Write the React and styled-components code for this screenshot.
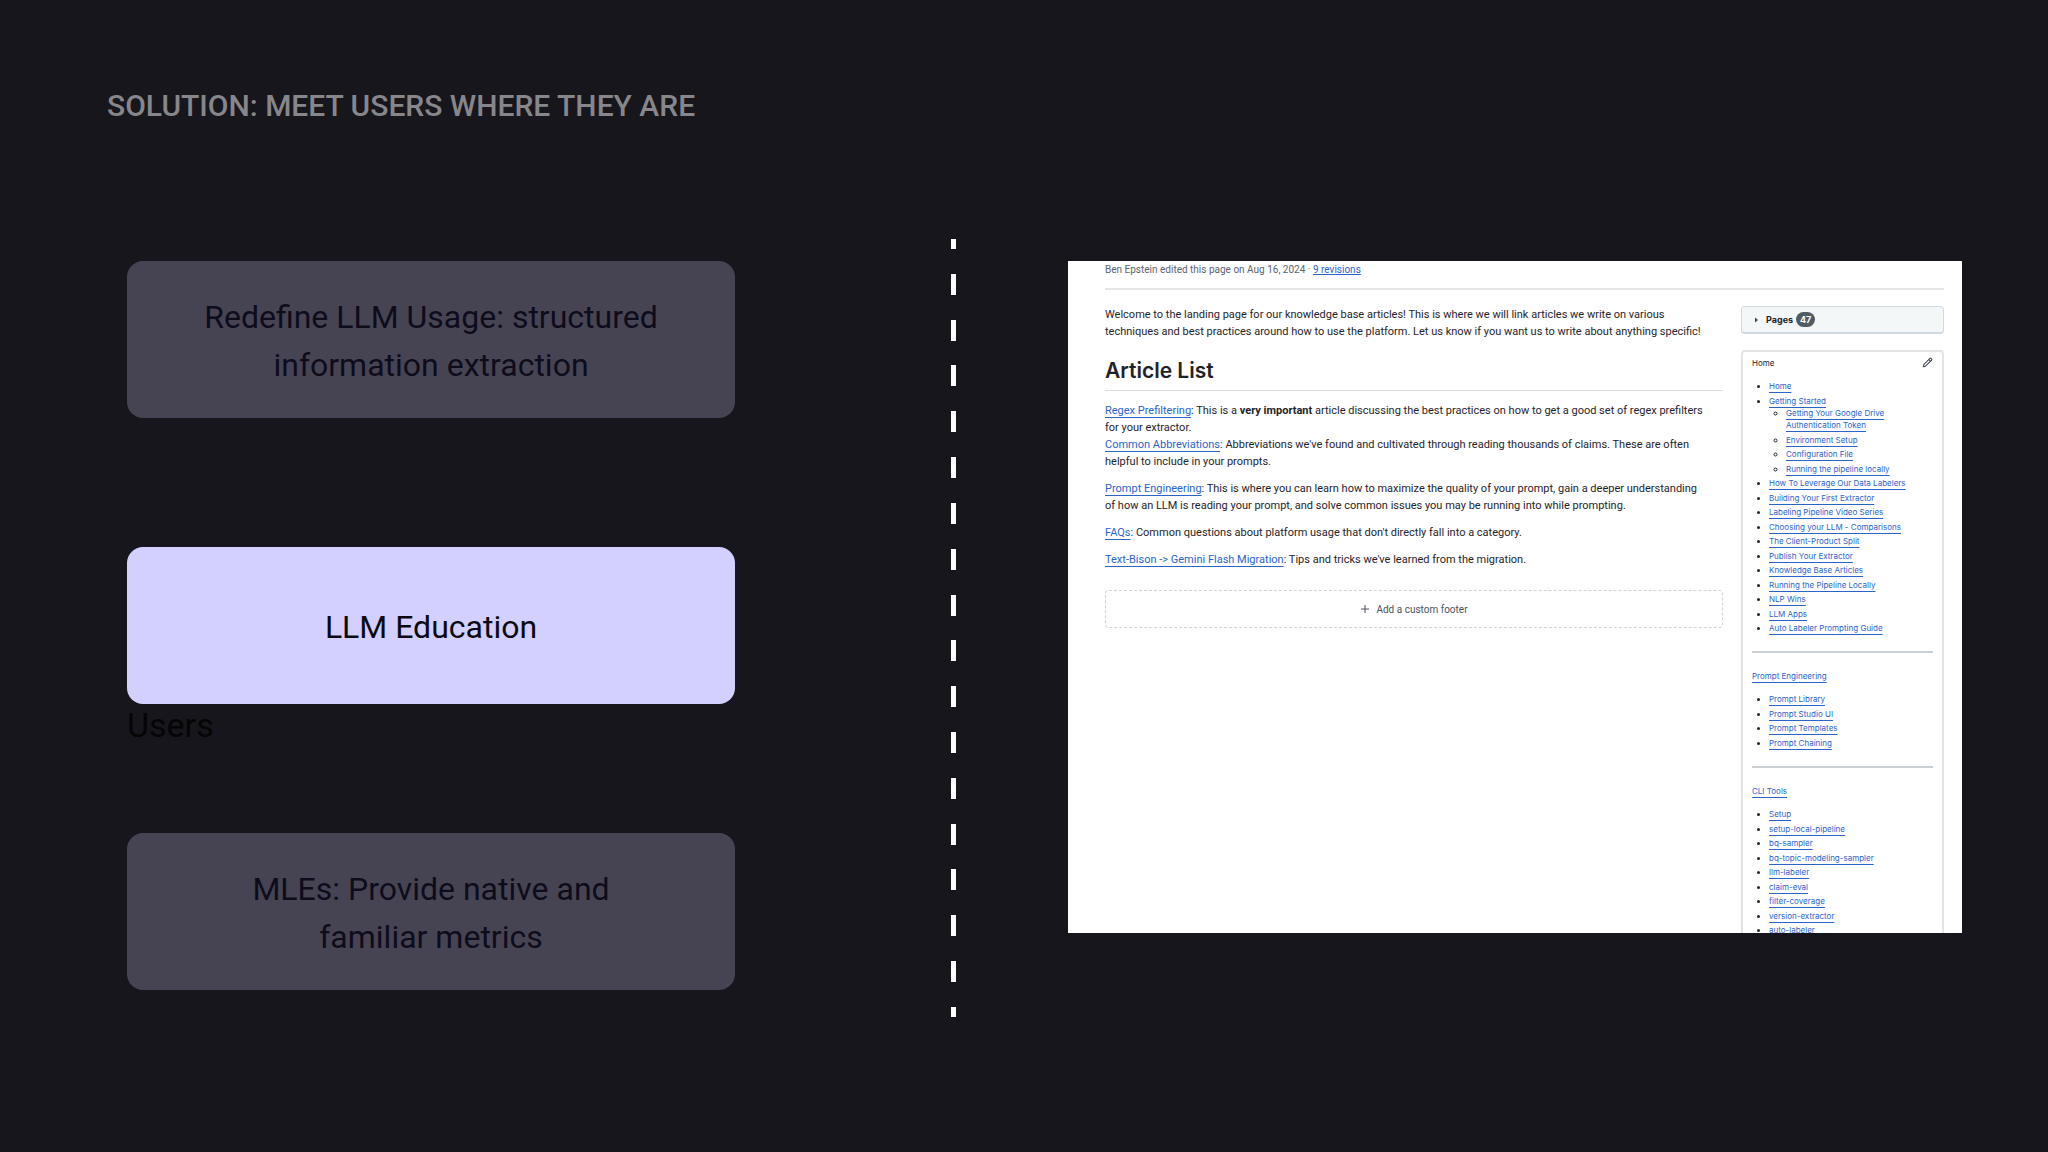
import React from "react";
import styled, { createGlobalStyle, css } from "styled-components";

const GlobalStyle = createGlobalStyle`
  *, *::before, *::after { box-sizing: border-box; }
  body { margin: 0; background: #17161c; }
`;

const displayFont = `Roboto, "Liberation Sans", sans-serif`;
const wikiFont = `Inter, "Liberation Sans", sans-serif`;

const Slide = styled.main`
  min-height: 100vh;
  background: #17161c;
  font-family: ${displayFont};
`;

const Title = styled.h1`
  margin: 0;
  padding: 86px 107px 0;
  color: #87868b;
  font-size: 30px;
  line-height: 40px;
  font-weight: 500;
  text-transform: uppercase;
`;

const Columns = styled.div`
  display: grid;
  grid-template-columns: minmax(0, 608fr) minmax(0, 333fr) minmax(0, 894fr);
  align-items: start;
  padding: 113px 86px 0 127px;
`;

const Steps = styled.div`
  padding-top: 22px;
`;

const Step = styled.section`
  min-height: 286px;
`;

const Card = styled.div`
  display: flex;
  align-items: center;
  justify-content: center;
  min-height: 157px;
  padding: 2px 64px 0;
  border-radius: 16px;
  background: ${(p) => (p.$active ? "#d3d0ff" : "#464453")};
  color: ${(p) => (p.$active ? "#0a0a14" : "#0e0c1b")};
  font-size: 32px;
  line-height: 48px;
  text-align: center;
`;

const StepNote = styled.div`
  color: #050506;
  font-size: 34px;
  line-height: 42px;
`;

const Divider = styled.div`
  display: flex;
  flex-direction: column;
  justify-content: space-between;
  justify-self: end;
  width: 5px;
  height: 778px;
  margin-right: 112px;
`;

const Dash = styled.span`
  height: ${(p) => (p.$short ? 10 : 21)}px;
  background: #ffffff;
`;

const WikiPage = styled.article`
  margin-top: 22px;
  aspect-ratio: 894 / 672;
  overflow: hidden;
  padding: 0 18px 0 37px;
  background: #ffffff;
  color: #1f2328;
  font-family: ${wikiFont};
  font-feature-settings: "calt" 0;
  font-size: 9px;
  line-height: 17px;
`;

const Revision = styled.div`
  padding-bottom: 10px;
  border-bottom: 2px solid #e4e6e8;
  color: #59636e;
  font-family: ${displayFont};
  font-size: 10px;
`;

const WikiBody = styled.div`
  display: grid;
  grid-template-columns: minmax(0, 1fr) 203px;
  gap: 18px;
  padding-top: 16px;
`;

const Prose = styled.div`
  font-family: ${displayFont};
  font-size: 11px;

  p { margin: 0 0 10px; }
`;

const ArticleHeading = styled.h2`
  margin: 17px 0 11px;
  padding-bottom: 5px;
  border-bottom: 1px solid #dcdfe2;
  font-family: ${wikiFont};
  font-size: 21px;
  line-height: 28px;
  font-weight: 600;
`;

const Link = styled.a`
  color: #2a64c8;
  text-decoration: underline;
  text-decoration-thickness: 1px;
  text-underline-offset: ${(p) => (p.$tight ? 1 : 3)}px;
`;

const FooterButton = styled.button`
  display: flex;
  align-items: center;
  justify-content: center;
  gap: 6px;
  width: 100%;
  height: 38px;
  margin-top: 22px;
  border: 1px dashed #d1d5d9;
  border-radius: 4px;
  background: transparent;
  color: #4b535c;
  font-family: inherit;
  font-size: 10px;
`;

const Sidebar = styled.aside`
  display: flex;
  flex-direction: column;
  gap: 16px;
`;

const PagesToggle = styled.button`
  display: flex;
  align-items: center;
  height: 28px;
  padding: 0 13px;
  border: 1px solid #d1d9e0;
  border-bottom-width: 2px;
  border-radius: 4px;
  background: #f4f7f8;
  color: #1f2328;
  font-family: inherit;
  font-size: 9px;
  font-weight: 700;
`;

const Caret = styled.svg`
  margin-right: 7px;
`;

const Count = styled.span`
  margin-left: 3px;
  padding: 0 4px;
  border-radius: 8px;
  background: #535b64;
  color: #ffffff;
  line-height: 15px;
`;

const PageIndex = styled.nav`
  padding: 5px 9px;
  border: 2px solid #e2e4e6;
  border-radius: 4px;
  font-size: 8px;
  line-height: 12px;
`;

const IndexHeader = styled.div`
  display: flex;
  justify-content: space-between;
`;

const EditButton = styled.button`
  display: flex;
  padding: 0;
  border: 0;
  background: transparent;
  color: #3d444d;
`;

const indexGap = css`
  margin-top: 11px;
`;

const LinkList = styled.ul`
  margin: 0;
  padding-left: 17px;
  list-style: ${(p) => (p.$nested ? "circle" : "disc")};
  ${(p) => !p.$nested && indexGap}

  > li:nth-child(n + 2) { margin-top: 2px; }
  > li:nth-child(even) { margin-top: 3px; }
  > li::marker { color: #1f2328; }
`;

const Rule = styled.hr`
  height: 2px;
  margin: 17px 0;
  border: 0;
  background: #c9cfd2;
`;

const dashes = Array.from({ length: 18 }, (_, i) => i === 0 || i === 17);

const homeLinks = [
  { label: "Home" },
  {
    label: "Getting Started",
    children: [
      { label: "Getting Your Google Drive Authentication Token", lines: ["Getting Your Google Drive", "Authentication Token"] },
      { label: "Environment Setup" },
      { label: "Configuration File" },
      { label: "Running the pipeline locally" },
    ],
  },
  { label: "How To Leverage Our Data Labelers" },
  { label: "Building Your First Extractor" },
  { label: "Labeling Pipeline Video Series" },
  { label: "Choosing your LLM - Comparisons" },
  { label: "The Client-Product Split" },
  { label: "Publish Your Extractor" },
  { label: "Knowledge Base Articles" },
  { label: "Running the Pipeline Locally" },
  { label: "NLP Wins" },
  { label: "LLM Apps" },
  { label: "Auto Labeler Prompting Guide" },
];

const promptLinks = ["Prompt Library", "Prompt Studio UI", "Prompt Templates", "Prompt Chaining"].map(
  (label) => ({ label })
);

const cliLinks = [
  "Setup",
  "setup-local-pipeline",
  "bq-sampler",
  "bq-topic-modeling-sampler",
  "llm-labeler",
  "claim-eval",
  "filter-coverage",
  "version-extractor",
  "auto-labeler",
].map((label) => ({ label }));

function Links({ items, nested }) {
  return (
    <LinkList $nested={nested}>
      {items.map((item) => (
        <li key={item.label}>
          <Link href="#">
            {item.lines ? (
              <>
                {item.lines[0]}
                <br />
                {item.lines[1]}
              </>
            ) : (
              item.label
            )}
          </Link>
          {item.children && <Links items={item.children} nested />}
        </li>
      ))}
    </LinkList>
  );
}

export default function App() {
  return (
    <Slide>
      <GlobalStyle />
      <Title>Solution: Meet users where they are</Title>
      <Columns>
        <Steps>
          <Step>
            <Card>Redefine LLM Usage: structured information extraction</Card>
          </Step>
          <Step>
            <Card $active>LLM Education</Card>
            <StepNote>Users</StepNote>
          </Step>
          <Step>
            <Card>
              MLEs: Provide native and
              <br />
              familiar metrics
            </Card>
          </Step>
        </Steps>

        <Divider>
          {dashes.map((short, i) => (
            <Dash key={i} $short={short} />
          ))}
        </Divider>

        <WikiPage>
          <Revision>
            Ben Epstein edited this page on Aug 16, 2024 · <Link $tight href="#">9 revisions</Link>
          </Revision>
          <WikiBody>
            <Prose>
              <p>
                Welcome to the landing page for our knowledge base articles! This is where we will link articles
                we write on various
                <br />
                techniques and best practices around how to use the platform. Let us know if you want us to write
                about anything specific!
              </p>
              <ArticleHeading>Article List</ArticleHeading>
              <p>
                <Link href="#">Regex Prefiltering</Link>: This is a <strong>very important</strong> article
                discussing the best practices on how to get a good set of regex prefilters
                <br />
                for your extractor.
                <br />
                <Link href="#">Common Abbreviations</Link>: Abbreviations we've found and cultivated through
                reading thousands of claims. These are often
                <br />
                helpful to include in your prompts.
              </p>
              <p>
                <Link href="#">Prompt Engineering</Link>: This is where you can learn how to maximize the quality
                of your prompt, gain a deeper understanding
                <br />
                of how an LLM is reading your prompt, and solve common issues you may be running into while
                prompting.
              </p>
              <p>
                <Link href="#">FAQs</Link>: Common questions about platform usage that don't directly fall into a
                category.
              </p>
              <p>
                <Link href="#">Text-Bison -&gt; Gemini Flash Migration</Link>: Tips and tricks we've learned from
                the migration.
              </p>
              <FooterButton type="button">
                <svg width="10" height="10" viewBox="0 0 10 10" fill="none" stroke="currentColor">
                  <path d="M5 1v8M1 5h8" />
                </svg>
                Add a custom footer
              </FooterButton>
            </Prose>

            <Sidebar>
              <PagesToggle type="button" aria-expanded="false">
                <Caret width="4" height="6" viewBox="0 0 4 6">
                  <path d="M0 0.5 3 3 0 5.5z" fill="#3d444d" />
                </Caret>
                Pages <Count>47</Count>
              </PagesToggle>
              <PageIndex>
                <IndexHeader>
                  Home
                  <EditButton type="button" aria-label="Edit sidebar">
                    <svg width="11" height="11" viewBox="0 0 16 16" fill="currentColor">
                      <path d="M11.013 1.427a1.75 1.75 0 0 1 2.474 0l1.086 1.086a1.75 1.75 0 0 1 0 2.474l-8.61 8.61c-.21.21-.47.364-.756.445l-3.251.93a.75.75 0 0 1-.927-.928l.929-3.25c.081-.286.235-.547.445-.758l8.61-8.61Zm.176 4.823L9.75 4.81l-6.286 6.287a.253.253 0 0 0-.064.108l-.558 1.953 1.953-.558a.253.253 0 0 0 .108-.064Zm1.238-3.763a.25.25 0 0 0-.354 0L10.811 3.75l1.439 1.44 1.263-1.263a.25.25 0 0 0 0-.354Z" />
                    </svg>
                  </EditButton>
                </IndexHeader>
                <Links items={homeLinks} />
                <Rule />
                <Link href="#">Prompt Engineering</Link>
                <Links items={promptLinks} />
                <Rule />
                <Link href="#">CLI Tools</Link>
                <Links items={cliLinks} />
              </PageIndex>
            </Sidebar>
          </WikiBody>
        </WikiPage>
      </Columns>
    </Slide>
  );
}
